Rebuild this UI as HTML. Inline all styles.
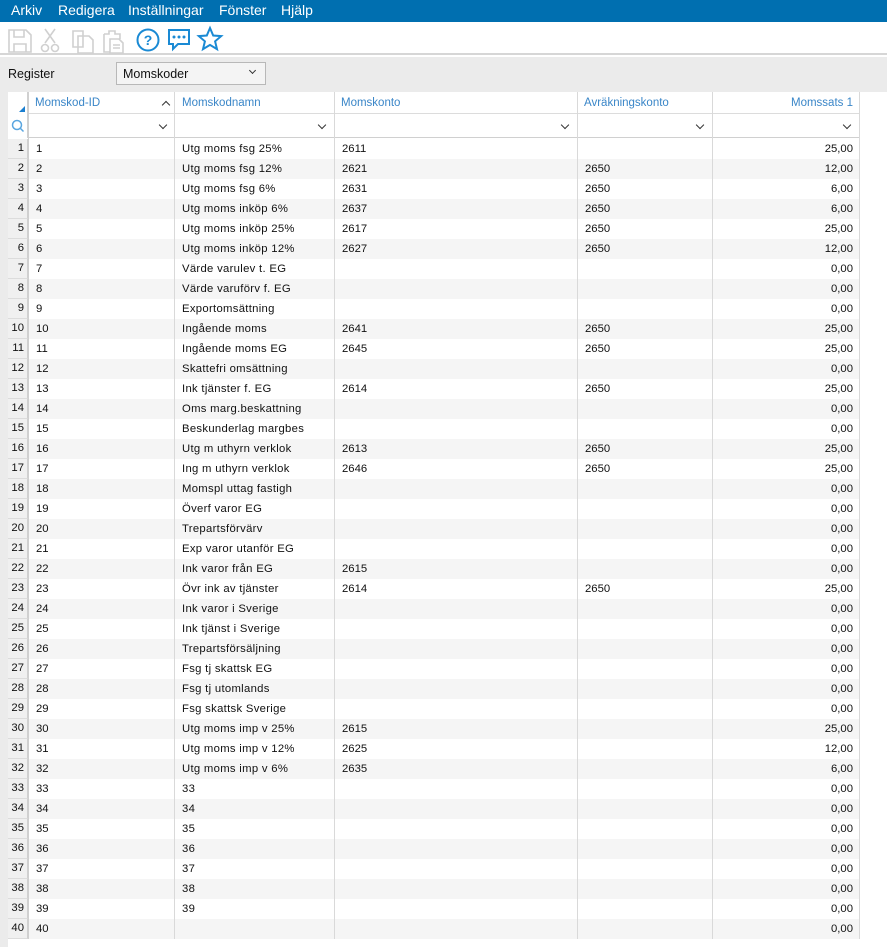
<!DOCTYPE html>
<html><head><meta charset="utf-8"><style>
*{margin:0;padding:0;box-sizing:border-box}
body{width:887px;height:947px;background:#fff;font-family:"Liberation Sans",sans-serif;font-size:11.3px;color:#111;position:relative;overflow:hidden}
#menu{position:absolute;left:0;top:0;width:887px;height:22px;background:#006fb0;color:#fff;font-size:14px}
#menu span{position:absolute;top:2px}
#tb{position:absolute;top:22px;left:0;width:887px;height:33px;background:#fff;border-bottom:2px solid #d6d6d6}
#panel{position:absolute;top:57px;left:0;width:887px;height:890px;background:#ebebeb}
#reg{position:absolute;left:8px;top:67px;font-size:12.5px}
#sel{position:absolute;left:116px;top:62px;width:150px;height:23px;background:#f4f4f4;border:1px solid #b8b8b8;font-size:12.5px;padding:4px 0 0 6px}
#grid{position:absolute;left:8px;top:92px;width:879px;height:855px;background:#fff}
.r{position:absolute;left:0;width:851px;height:20px}
.r.g{background:#f5f5f5}
.c{position:absolute;top:0;height:20px;line-height:20px;white-space:nowrap}
.n{position:absolute;left:0;top:0;width:20px;height:20px;background:#f0f0f0;border-bottom:1px solid #dcdcdc;border-right:1px solid #d0d0d0;text-align:right;padding-right:3px;line-height:19px}
.vl{position:absolute;top:0;width:1px;background:#d9d9d9}
.h{position:absolute;top:0;height:22px;line-height:22px;color:#3a86c8;font-size:11.5px}
.chev{position:absolute;width:6px;height:6px;border-right:1.4px solid #333;border-bottom:1.4px solid #333;transform:rotate(45deg)}
</style></head><body>
<div id="menu"><span style="left:11px">Arkiv</span><span style="left:58px">Redigera</span><span style="left:128px">Inställningar</span><span style="left:219px">Fönster</span><span style="left:281px">Hjälp</span></div>
<div id="tb">
<svg width="230" height="33" style="position:absolute;left:0;top:0" fill="none" stroke-width="1.6">
<g stroke="#d0d0d0"><path d="M9 8h17l5 5v17H9z M14 8v7h10V8 M14 30v-8h12v8"/>
<path d="M45 7l10 14 M55 7L45 21"/><circle cx="45" cy="26" r="3.5"/><circle cx="55" cy="26" r="3.5"/>
<path d="M73 9h10v16H73z M78 14h11l4 4v13H78z"/>
<path d="M104 12h5v-3h6v3h5v5 M104 12v18h6 M110 17h9l4 4v10h-13z M113 23h7 M113 26h7"/></g>
<g stroke="#1a8ad4" stroke-width="2"><circle cx="148" cy="18" r="10.5"/>
<path d="M169 8h20v14h-11l-5 5v-5h-4z"/><path d="M210 6l3.2 7.5 8 .6-6.1 5.2 1.9 7.8-7-4.2-7 4.2 1.9-7.8-6.1-5.2 8-.6z"/></g>
<text x="148" y="23" fill="#1a8ad4" font-size="14" font-weight="bold" text-anchor="middle" font-family="Liberation Sans">?</text>
<g fill="#1a8ad4"><circle cx="174" cy="15" r="1.5"/><circle cx="179" cy="15" r="1.5"/><circle cx="184" cy="15" r="1.5"/></g>
</svg></div>
<div id="panel"></div>
<div id="reg">Register</div>
<div id="sel">Momskoder<div class="chev" style="left:133px;top:5px;width:5px;height:5px;border-width:1.2px"></div></div>
<div id="grid">
<div style="position:absolute;left:0;top:0;width:851px;height:22px;background:#fff;border-bottom:1px solid #dcdcdc"></div>
<div style="position:absolute;left:0;top:22px;width:851px;height:24px;background:#fff;border-bottom:1px solid #d0d0d0"></div>
<div style="position:absolute;left:0;top:0;width:20px;height:46px;background:#fff;border-right:1px solid #d0d0d0"></div>
<div style="position:absolute;left:11px;top:14px;width:0;height:0;border-left:6px solid transparent;border-bottom:6px solid #1a7fd0"></div>
<svg style="position:absolute;left:3px;top:27px" width="14" height="14" fill="none" stroke="#5aa6e0" stroke-width="1.5"><circle cx="6" cy="6" r="4.5"/><path d="M9.5 9.5l3 3"/></svg>
<div class="h" style="left:27px">Momskod-ID</div>
<div class="chev" style="left:155px;top:10px;transform:rotate(225deg)"></div>
<div class="h" style="left:174px">Momskodnamn</div>
<div class="h" style="left:333px">Momskonto</div>
<div class="h" style="left:576px">Avräkningskonto</div>
<div class="h" style="left:704px;width:141px;text-align:right">Momssats 1</div>
<div class="chev" style="left:152px;top:30px"></div>
<div class="chev" style="left:311px;top:30px"></div>
<div class="chev" style="left:554px;top:30px"></div>
<div class="chev" style="left:689px;top:30px"></div>
<div class="chev" style="left:836px;top:30px"></div>
<div id="rows"></div>
<div class="vl" style="left:20px;height:847px;background:#d0d0d0"></div>
<div class="vl" style="left:166px;height:847px"></div>
<div class="vl" style="left:326px;height:847px"></div>
<div class="vl" style="left:569px;height:847px"></div>
<div class="vl" style="left:704px;height:847px"></div>
<div class="vl" style="left:851px;height:847px"></div>
</div>
<script>
var d=[["Utg moms fsg 25%","2611","","25,00"],["Utg moms fsg 12%","2621","2650","12,00"],["Utg moms fsg 6%","2631","2650","6,00"],["Utg moms inköp 6%","2637","2650","6,00"],["Utg moms inköp 25%","2617","2650","25,00"],["Utg moms inköp 12%","2627","2650","12,00"],["Värde varulev t. EG","","","0,00"],["Värde varuförv f. EG","","","0,00"],["Exportomsättning","","","0,00"],["Ingående moms","2641","2650","25,00"],["Ingående moms EG","2645","2650","25,00"],["Skattefri omsättning","","","0,00"],["Ink tjänster f. EG","2614","2650","25,00"],["Oms marg.beskattning","","","0,00"],["Beskunderlag margbes","","","0,00"],["Utg m uthyrn verklok","2613","2650","25,00"],["Ing m uthyrn verklok","2646","2650","25,00"],["Momspl uttag fastigh","","","0,00"],["Överf varor EG","","","0,00"],["Trepartsförvärv","","","0,00"],["Exp varor utanför EG","","","0,00"],["Ink varor från EG","2615","","0,00"],["Övr ink av tjänster","2614","2650","25,00"],["Ink varor i Sverige","","","0,00"],["Ink tjänst i Sverige","","","0,00"],["Trepartsförsäljning","","","0,00"],["Fsg tj skattsk EG","","","0,00"],["Fsg tj utomlands","","","0,00"],["Fsg skattsk Sverige","","","0,00"],["Utg moms imp v 25%","2615","","25,00"],["Utg moms imp v 12%","2625","","12,00"],["Utg moms imp v 6%","2635","","6,00"]];
var h="";
for(var i=1;i<=40;i++){var r=d[i-1]||[i<40?String(i):"","","","0,00"];
h+='<div class="r'+(i%2==0?' g':'')+'" style="top:'+(47+(i-1)*20)+'px"><div class="n">'+i+'</div><div class="c" style="left:28px">'+i+'</div><div class="c" style="left:174px;letter-spacing:.3px">'+r[0]+'</div><div class="c" style="left:334px">'+r[1]+'</div><div class="c" style="left:577px">'+r[2]+'</div><div class="c" style="left:704px;width:141px;text-align:right">'+r[3]+'</div></div>';}
document.getElementById("rows").innerHTML=h;
</script>
</body></html>
